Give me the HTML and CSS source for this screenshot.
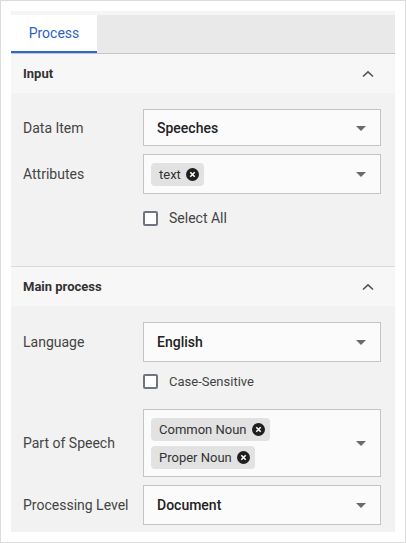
FILE: index.html
```html
<!DOCTYPE html>
<html lang="en">
<head>
<meta charset="utf-8">
<title>Process</title>
<link rel="stylesheet" href="styles.css">
</head>
<body>
<div class="frame">
  <div class="panel">
    <div class="tabstrip">
      <div class="tabs">
        <div class="tab active">Process</div>
      </div>
    </div>

    <section class="group">
      <header class="group-head">
        <span>Input</span>
        <svg class="chev" width="12" height="8" viewBox="0 0 12 8"><path d="M1 6.5 6 1.8 11 6.5" fill="none" stroke="#555" stroke-width="1.6"/></svg>
      </header>
      <div class="group-body body-input">
        <div class="field">
          <label class="lbl">Data Item</label>
          <div class="select"><span class="value">Speeches</span><i class="caret"></i></div>
        </div>
        <div class="field">
          <label class="lbl">Attributes</label>
          <div class="select multi">
            <div class="chips">
              <span class="chip">text<svg class="x" width="13" height="13" viewBox="0 0 13 13"><circle cx="6.5" cy="6.5" r="6.5" fill="#1f1f1f"/><path d="M4.3 4.3 8.7 8.7M8.7 4.3 4.3 8.7" stroke="#fff" stroke-width="1.6"/></svg></span>
            </div>
            <i class="caret"></i>
          </div>
        </div>
        <div class="field">
          <span></span>
          <label class="check"><span class="box"></span>Select All</label>
        </div>
      </div>
    </section>

    <section class="group">
      <header class="group-head">
        <span>Main process</span>
        <svg class="chev" width="12" height="8" viewBox="0 0 12 8"><path d="M1 6.5 6 1.8 11 6.5" fill="none" stroke="#555" stroke-width="1.6"/></svg>
      </header>
      <div class="group-body body-main">
        <div class="field">
          <label class="lbl">Language</label>
          <div class="select tall"><span class="value">English</span><i class="caret"></i></div>
        </div>
        <div class="field">
          <span></span>
          <label class="check small"><span class="box"></span>Case-Sensitive</label>
        </div>
        <div class="field">
          <label class="lbl">Part of Speech</label>
          <div class="select multi">
            <div class="chips stack">
              <span class="chip">Common Noun<svg class="x" width="13" height="13" viewBox="0 0 13 13"><circle cx="6.5" cy="6.5" r="6.5" fill="#1f1f1f"/><path d="M4.3 4.3 8.7 8.7M8.7 4.3 4.3 8.7" stroke="#fff" stroke-width="1.6"/></svg></span>
              <span class="chip">Proper Noun<svg class="x" width="13" height="13" viewBox="0 0 13 13"><circle cx="6.5" cy="6.5" r="6.5" fill="#1f1f1f"/><path d="M4.3 4.3 8.7 8.7M8.7 4.3 4.3 8.7" stroke="#fff" stroke-width="1.6"/></svg></span>
            </div>
            <i class="caret"></i>
          </div>
        </div>
        <div class="field">
          <label class="lbl">Processing Level</label>
          <div class="select tall"><span class="value">Document</span><i class="caret"></i></div>
        </div>
      </div>
    </section>
  </div>
</div>
</body>
</html>
```

FILE: styles.css
```css
* { box-sizing: border-box; }

html, body {
  margin: 0;
  background: #fff;
  font-family: Roboto, "Liberation Sans", Arial, sans-serif;
}

.frame {
  width: 406px;
  height: 543px;
  border: 1px solid #dcdcdc;
  padding: 10px;
}

.panel {
  background: #f2f2f2;
  height: 521px;
}

/* tab bar */
.tabstrip {
  background: #f5f5f5;
  padding-top: 4px;
}

.tabs {
  display: flex;
  height: 39px;
  background: #e9e9e9;
  border-bottom: 1px solid #c6c6c6;
}

.tab {
  width: 86px;
  display: flex;
  align-items: center;
  justify-content: center;
  font-size: 14px;
  color: #2f62bf;
  padding-bottom: 1px;
}

.tab.active {
  background: #fff;
  border-bottom: 2px solid #2f68cc;
}

/* collapsible groups */
.group + .group {
  border-top: 1px solid #dadada;
}

.group-head {
  height: 39px;
  background: #f7f7f7;
  display: flex;
  align-items: center;
  justify-content: space-between;
  padding: 0 21px 0 12px;
  font-size: 13px;
  font-weight: 700;
  color: #333;
}

.chev { display: block; }

.group-body {
  display: flex;
  flex-direction: column;
  padding: 16px 14px 0 12px;
}

.body-input {
  gap: 8px;
  height: 173px;
}

.body-main {
  padding-top: 16px;
  gap: 8px;
}

.field {
  display: grid;
  grid-template-columns: 120px 1fr;
  align-items: center;
}

.lbl {
  font-size: 14px;
  color: #444;
}

/* dropdowns */
.select {
  position: relative;
  height: 37px;
  background: #fbfbfc;
  border: 1px solid #c4c4c4;
  display: flex;
  align-items: center;
  padding: 0 36px 0 13px;
}

.select.tall { height: 40px; }

.value {
  font-size: 14px;
  font-weight: 500;
  color: #222;
}

.caret {
  position: absolute;
  right: 14px;
  top: 50%;
  margin-top: -2px;
  width: 0;
  height: 0;
  border-left: 5px solid transparent;
  border-right: 5px solid transparent;
  border-top: 5px solid #6a6a6a;
}

.select.multi {
  height: auto;
  padding: 8px 36px 7px 7px;
}

.chips {
  display: flex;
  flex-wrap: wrap;
  gap: 5px;
}

.chips.stack {
  flex-direction: column;
  align-items: flex-start;
}

.chip {
  display: inline-flex;
  align-items: center;
  gap: 5px;
  height: 23px;
  padding: 0 5px 0 8px;
  background: #e2e2e2;
  border-radius: 4px;
  font-size: 13px;
  color: #333;
}

.chip .x { display: block; }

/* checkboxes */
.check {
  display: flex;
  align-items: center;
  gap: 11px;
  font-size: 14px;
  color: #444;
  margin-top: 8px;
}

.check.small {
  font-size: 13px;
  margin-top: 4px;
  margin-bottom: 12px;
}

.box {
  width: 15px;
  height: 15px;
  border: 2px solid #6e7580;
  border-radius: 2px;
  background: #fff;
  flex: none;
}
```
